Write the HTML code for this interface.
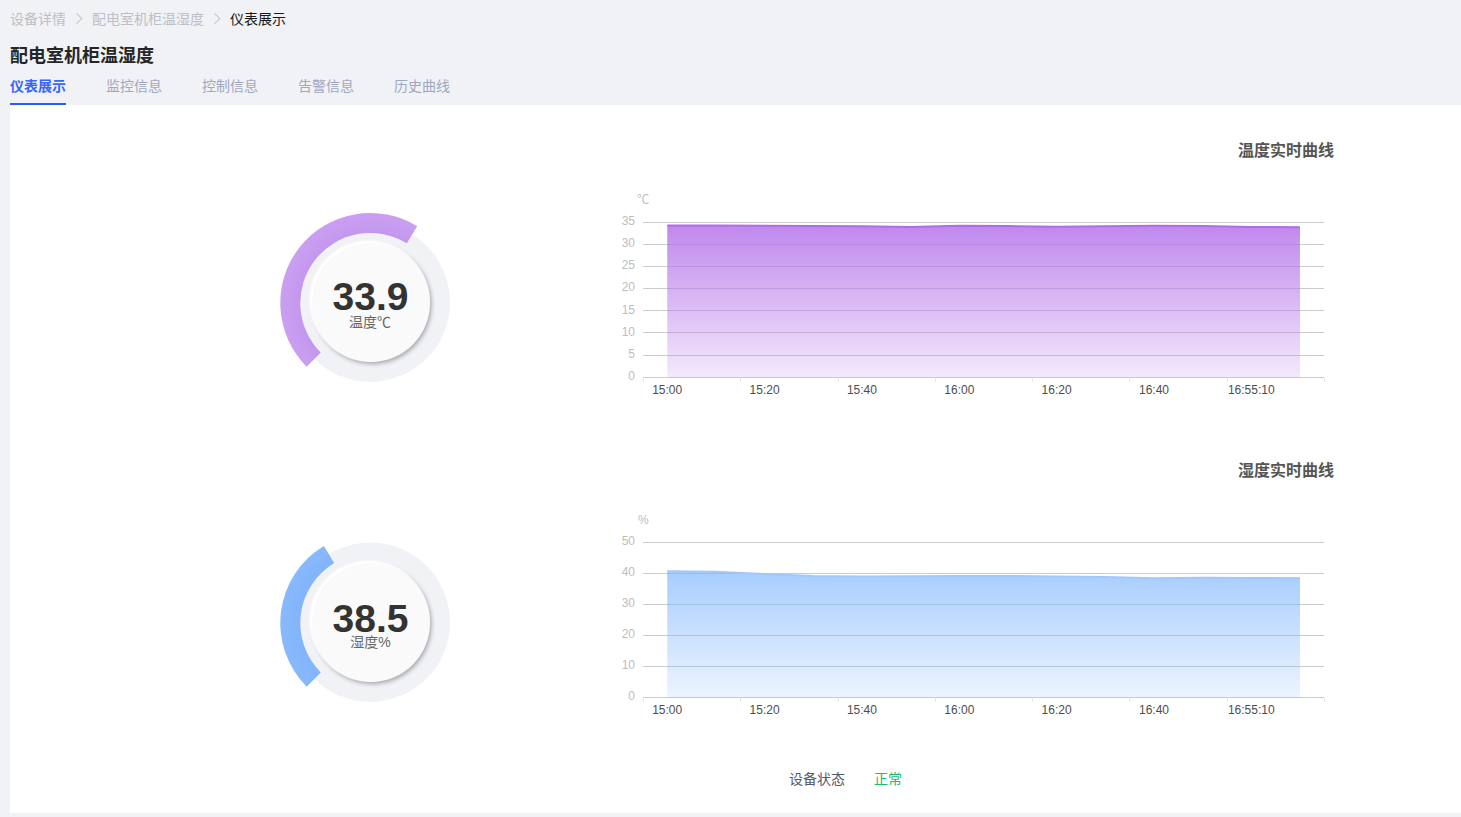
<!DOCTYPE html>
<html lang="zh-CN"><head><meta charset="utf-8"><title>配电室机柜温湿度</title>
<style>
html,body{margin:0;padding:0}
body{width:1461px;height:817px;overflow:hidden;background:#f0f2f5;position:relative;font-family:"Liberation Sans","Noto Sans CJK SC",sans-serif;font-size:14px;color:#515a6e}
.abs{position:absolute;white-space:nowrap;line-height:1}
.bc{top:12px;font-size:14px;color:#bcbfc5}
.bc.cur{color:#1a1a1a}
.title{left:10px;top:47px;font-size:18px;font-weight:bold;color:#262626}
.tab{top:79px;font-size:14px;color:#a0a7c0}
.tab.on{color:#3865fa;font-weight:bold}
.ink{left:10px;top:103px;width:56px;height:2px;background:#2d5cf6}
.panel{left:10px;top:105px;width:1451px;height:708px;background:#fff}
.cv{position:absolute;left:0;top:0}
.yl{font-size:12px;fill:#bdbdbd;font-family:"Liberation Sans","Noto Sans CJK SC",sans-serif}
.xl{font-size:12px;fill:#4d4d4d;font-family:"Liberation Sans","Noto Sans CJK SC",sans-serif}
.ct{font-size:16px;font-weight:bold;color:#555;width:96px;left:1238px;text-align:right}
.knob{width:118.6px;height:118.6px;border-radius:50%;background:#fafafa;box-shadow:-2px -2px 2px .5px #fff,1.5px 2px 4px rgba(0,0,0,.3)}
.num{width:120px;text-align:center;font-size:39px;font-weight:bold;color:#333}
.lab{width:120px;text-align:center;font-size:14px;color:#666}
</style></head><body>
<div class="abs bc" style="left:10px">设备详情</div>
<div class="abs bc" style="left:92px">配电室机柜温湿度</div>
<div class="abs bc cur" style="left:230px">仪表展示</div>
<div class="abs title">配电室机柜温湿度</div>
<div class="abs tab on" style="left:10px">仪表展示</div>
<div class="abs tab" style="left:106px">监控信息</div>
<div class="abs tab" style="left:202px">控制信息</div>
<div class="abs tab" style="left:298px">告警信息</div>
<div class="abs tab" style="left:394px">历史曲线</div>
<div class="abs ink"></div>
<div class="abs panel"></div>
<svg class="cv" width="1461" height="817" viewBox="0 0 1461 817">
<path d="M76.3 13.4L81.9 18.6L76.3 23.8" fill="none" stroke="#c5c8ce" stroke-width="1.1"/>
<path d="M214.3 13.4L219.9 18.6L214.3 23.8" fill="none" stroke="#c5c8ce" stroke-width="1.1"/>
<linearGradient id="ga" x1="0" y1="0" x2="0" y2="1"><stop offset="0" stop-color="#b574ea" stop-opacity="0.85"/><stop offset="1" stop-color="#b574ea" stop-opacity="0.16"/></linearGradient>
<line x1="643" x2="1324" y1="377.5" y2="377.5" stroke="#ccc" stroke-width="1"/>
<text x="635" y="379.9" text-anchor="end" class="yl">0</text>
<line x1="643" x2="1324" y1="355.5" y2="355.5" stroke="#ccc" stroke-width="1"/>
<text x="635" y="357.8" text-anchor="end" class="yl">5</text>
<line x1="643" x2="1324" y1="332.5" y2="332.5" stroke="#ccc" stroke-width="1"/>
<text x="635" y="335.6" text-anchor="end" class="yl">10</text>
<line x1="643" x2="1324" y1="310.5" y2="310.5" stroke="#ccc" stroke-width="1"/>
<text x="635" y="313.5" text-anchor="end" class="yl">15</text>
<line x1="643" x2="1324" y1="288.5" y2="288.5" stroke="#ccc" stroke-width="1"/>
<text x="635" y="291.3" text-anchor="end" class="yl">20</text>
<line x1="643" x2="1324" y1="266.5" y2="266.5" stroke="#ccc" stroke-width="1"/>
<text x="635" y="269.2" text-anchor="end" class="yl">25</text>
<line x1="643" x2="1324" y1="244.5" y2="244.5" stroke="#ccc" stroke-width="1"/>
<text x="635" y="247.0" text-anchor="end" class="yl">30</text>
<line x1="643" x2="1324" y1="222.5" y2="222.5" stroke="#ccc" stroke-width="1"/>
<text x="635" y="224.9" text-anchor="end" class="yl">35</text>
<text x="643.3" y="204.0" text-anchor="middle" class="yl">℃</text>
<path d="M667.24 225.60 L715.91 225.60 L764.58 225.82 L813.25 226.04 L861.92 226.26 L910.59 226.93 L959.26 225.82 L1007.94 226.04 L1056.61 226.71 L1105.28 226.26 L1153.95 225.82 L1202.62 226.04 L1251.29 226.93 L1299.96 227.37 L1299.96 377.5 L667.24 377.5 Z" fill="url(#ga)"/>
<path d="M667.24 225.60 L715.91 225.60 L764.58 225.82 L813.25 226.04 L861.92 226.26 L910.59 226.93 L959.26 225.82 L1007.94 226.04 L1056.61 226.71 L1105.28 226.26 L1153.95 225.82 L1202.62 226.04 L1251.29 226.93 L1299.96 227.37" fill="none" stroke="#b26be8" stroke-width="2" stroke-linejoin="round"/>
<line x1="643.5" x2="643.5" y1="377.5" y2="382.0" stroke="#e6e6e6" stroke-width="1"/>
<line x1="740.5" x2="740.5" y1="377.5" y2="382.0" stroke="#e6e6e6" stroke-width="1"/>
<line x1="838.5" x2="838.5" y1="377.5" y2="382.0" stroke="#e6e6e6" stroke-width="1"/>
<line x1="935.5" x2="935.5" y1="377.5" y2="382.0" stroke="#e6e6e6" stroke-width="1"/>
<line x1="1032.5" x2="1032.5" y1="377.5" y2="382.0" stroke="#e6e6e6" stroke-width="1"/>
<line x1="1129.5" x2="1129.5" y1="377.5" y2="382.0" stroke="#e6e6e6" stroke-width="1"/>
<line x1="1227.5" x2="1227.5" y1="377.5" y2="382.0" stroke="#e6e6e6" stroke-width="1"/>
<line x1="1324.5" x2="1324.5" y1="377.5" y2="382.0" stroke="#e6e6e6" stroke-width="1"/>
<text x="667.2" y="393.8" text-anchor="middle" class="xl">15:00</text>
<text x="764.6" y="393.8" text-anchor="middle" class="xl">15:20</text>
<text x="861.9" y="393.8" text-anchor="middle" class="xl">15:40</text>
<text x="959.3" y="393.8" text-anchor="middle" class="xl">16:00</text>
<text x="1056.6" y="393.8" text-anchor="middle" class="xl">16:20</text>
<text x="1154.0" y="393.8" text-anchor="middle" class="xl">16:40</text>
<text x="1251.3" y="393.8" text-anchor="middle" class="xl">16:55:10</text>
<linearGradient id="gb" x1="0" y1="0" x2="0" y2="1"><stop offset="0" stop-color="#79b2fc" stop-opacity="0.65"/><stop offset="1" stop-color="#79b2fc" stop-opacity="0.14"/></linearGradient>
<line x1="643" x2="1324" y1="697.5" y2="697.5" stroke="#ccc" stroke-width="1"/>
<text x="635" y="699.9" text-anchor="end" class="yl">0</text>
<line x1="643" x2="1324" y1="666.5" y2="666.5" stroke="#ccc" stroke-width="1"/>
<text x="635" y="668.9" text-anchor="end" class="yl">10</text>
<line x1="643" x2="1324" y1="635.5" y2="635.5" stroke="#ccc" stroke-width="1"/>
<text x="635" y="637.9" text-anchor="end" class="yl">20</text>
<line x1="643" x2="1324" y1="604.5" y2="604.5" stroke="#ccc" stroke-width="1"/>
<text x="635" y="606.9" text-anchor="end" class="yl">30</text>
<line x1="643" x2="1324" y1="573.5" y2="573.5" stroke="#ccc" stroke-width="1"/>
<text x="635" y="575.9" text-anchor="end" class="yl">40</text>
<line x1="643" x2="1324" y1="542.5" y2="542.5" stroke="#ccc" stroke-width="1"/>
<text x="635" y="544.9" text-anchor="end" class="yl">50</text>
<text x="643.3" y="524.0" text-anchor="middle" class="yl">%</text>
<path d="M667.24 571.33 L715.91 571.64 L764.58 574.12 L813.25 575.98 L861.92 576.44 L910.59 576.13 L959.26 575.98 L1007.94 575.98 L1056.61 576.44 L1105.28 576.91 L1153.95 578.15 L1202.62 577.68 L1251.29 578.00 L1299.96 578.15 L1299.96 697.5 L667.24 697.5 Z" fill="url(#gb)"/>
<path d="M667.24 571.33 L715.91 571.64 L764.58 574.12 L813.25 575.98 L861.92 576.44 L910.59 576.13 L959.26 575.98 L1007.94 575.98 L1056.61 576.44 L1105.28 576.91 L1153.95 578.15 L1202.62 577.68 L1251.29 578.00 L1299.96 578.15" fill="none" stroke="#a2c7fc" stroke-width="2" stroke-linejoin="round"/>
<line x1="643.5" x2="643.5" y1="697.5" y2="702.0" stroke="#e6e6e6" stroke-width="1"/>
<line x1="740.5" x2="740.5" y1="697.5" y2="702.0" stroke="#e6e6e6" stroke-width="1"/>
<line x1="838.5" x2="838.5" y1="697.5" y2="702.0" stroke="#e6e6e6" stroke-width="1"/>
<line x1="935.5" x2="935.5" y1="697.5" y2="702.0" stroke="#e6e6e6" stroke-width="1"/>
<line x1="1032.5" x2="1032.5" y1="697.5" y2="702.0" stroke="#e6e6e6" stroke-width="1"/>
<line x1="1129.5" x2="1129.5" y1="697.5" y2="702.0" stroke="#e6e6e6" stroke-width="1"/>
<line x1="1227.5" x2="1227.5" y1="697.5" y2="702.0" stroke="#e6e6e6" stroke-width="1"/>
<line x1="1324.5" x2="1324.5" y1="697.5" y2="702.0" stroke="#e6e6e6" stroke-width="1"/>
<text x="667.2" y="713.8" text-anchor="middle" class="xl">15:00</text>
<text x="764.6" y="713.8" text-anchor="middle" class="xl">15:20</text>
<text x="861.9" y="713.8" text-anchor="middle" class="xl">15:40</text>
<text x="959.3" y="713.8" text-anchor="middle" class="xl">16:00</text>
<text x="1056.6" y="713.8" text-anchor="middle" class="xl">16:20</text>
<text x="1154.0" y="713.8" text-anchor="middle" class="xl">16:40</text>
<text x="1251.3" y="713.8" text-anchor="middle" class="xl">16:55:10</text>
<radialGradient id="ra" gradientUnits="userSpaceOnUse" cx="370.3" cy="303" r="90"><stop offset="0.777" stop-color="#c497ee"/><stop offset="1" stop-color="#ca9ff1"/></radialGradient>
<circle cx="370.3" cy="302.2" r="79.7" fill="#f1f2f6"/>
<path d="M306.66 366.64A90 90 0 0 1 417.22 226.20L406.79 243.26A70 70 0 0 0 320.80 352.50Z" fill="url(#ra)"/>
<radialGradient id="rb" gradientUnits="userSpaceOnUse" cx="370.3" cy="623" r="90"><stop offset="0.777" stop-color="#82b4fb"/><stop offset="1" stop-color="#89b9fc"/></radialGradient>
<circle cx="370.3" cy="622.2" r="79.7" fill="#f1f2f6"/>
<path d="M306.66 686.64A90 90 0 0 1 323.88 545.90L334.19 563.03A70 70 0 0 0 320.80 672.50Z" fill="url(#rb)"/>
</svg>
<div class="abs ct" style="top:143px">温度实时曲线</div>
<div class="abs ct" style="top:463px">湿度实时曲线</div>
<div class="abs knob" style="left:311.5px;top:243.05px"></div>
<div class="abs num" style="left:310.5px;top:277px">33.9</div>
<div class="abs lab" style="left:310px;top:315px">温度℃</div>
<div class="abs knob" style="left:311.5px;top:563.05px"></div>
<div class="abs num" style="left:310.5px;top:598.5px">38.5</div>
<div class="abs lab" style="left:310.5px;top:635px">湿度%</div>
<div class="abs" style="left:789px;top:772px;color:#515a6e">设备状态</div>
<div class="abs" style="left:874px;top:772px;color:#19be6b">正常</div>
</body></html>
